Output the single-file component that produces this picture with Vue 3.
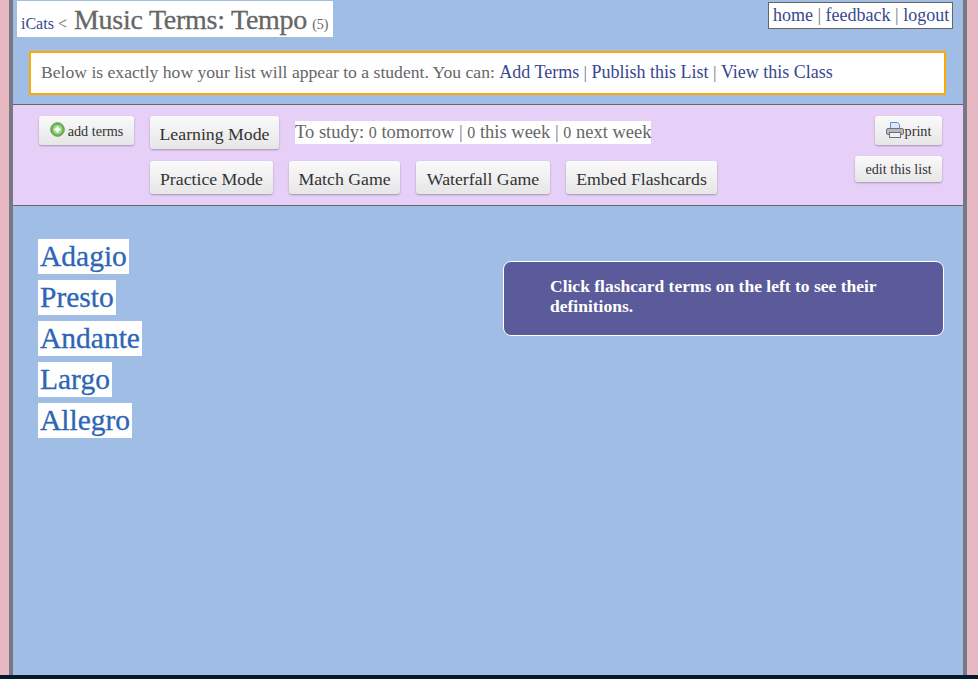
<script setup>
const terms = ['Adagio', 'Presto', 'Andante', 'Largo', 'Allegro']
const modes = [
  { label: 'Practice Mode', width: 123 },
  { label: 'Match Game', width: 111 },
  { label: 'Waterfall Game', width: 134 },
  { label: 'Embed Flashcards', width: 151 },
]
</script>

<template>
  <div class="page">
    <main class="frame">
      <header class="head">
        <div class="headrow">
          <h1 class="title"><a class="crumb">iCats</a> <span class="lt">&lt;</span> <span class="name">Music Terms: Tempo</span> <small class="count">(5)</small></h1>
          <nav class="nav"><a>home</a> <i>|</i> <a>feedback</a> <i>|</i> <a>logout</a></nav>
        </div>
        <p class="notice">Below is exactly how your list will appear to a student. You can: <a>Add Terms</a> <i>|</i> <a>Publish this List</a> <i>|</i> <a>View this Class</a></p>
      </header>
      <section class="tools">
        <div class="left"><button class="btn small add">
          <svg class="ico" width="15" height="15" viewBox="0 0 15 15"><circle cx="7.5" cy="7.5" r="6.8" fill="#6fb65a" stroke="#5a9c4a"/><circle cx="7.5" cy="7.5" r="4.6" fill="#a5d88f"/><path d="M7.5 4.5v6M4.5 7.5h6" stroke="#fff" stroke-width="2"/></svg>
          add terms</button></div>
        <div class="center">
          <div class="row first">
            <button class="btn learn">Learning Mode</button>
            <span class="study">To study: <b>0</b> tomorrow <i>|</i> <b>0</b> this week <i>|</i> <b>0</b> next week</span>
          </div>
          <div class="row">
            <button v-for="m in modes" :key="m.label" class="btn" :style="{ width: m.width + 'px' }">{{ m.label }}</button>
          </div>
        </div>
        <div class="right">
          <button class="btn small print">
            <svg class="ico" width="18" height="16" viewBox="0 0 18 16"><path d="M4.5 .5h7l2 2v7h-9z" fill="#dbe9f8" stroke="#5d8fcc"/><rect x=".5" y="6.5" width="17" height="6" rx="1.5" fill="#b4b9c0" stroke="#6d7278"/><rect x="3.5" y="10.5" width="11" height="5" fill="#eef0f2" stroke="#6d7278"/></svg>
            print</button>
          <button class="btn small edit">edit this list</button>
        </div>
      </section>
      <section class="content">
        <ul class="terms"><li v-for="t in terms" :key="t"><a>{{ t }}</a></li></ul>
        <aside class="card">Click flashcard terms on the left to see their definitions.</aside>
      </section>
    </main>
    <footer class="strip"></footer>
  </div>
</template>

<style scoped>
.page { height: 679px; overflow: hidden; background: #e7b8c1; display: flex; flex-direction: column; font-family: "Liberation Serif", serif; color: #666; }
.frame { flex: 1; margin: 0 11px 0 9px; border-left: 4px solid #777885; border-right: 4px solid #777885; background: #a0bde6; display: flex; flex-direction: column; min-height: 0; }
.strip { height: 4px; background: #031a2c; }
a { color: #37478f; }
i { font-style: normal; color: #6f7590; }
.head { height: 105px; box-sizing: border-box; padding: 1px 10px 0 4px; border-bottom: 1px solid #666; }
.headrow { display: flex; justify-content: space-between; align-items: flex-start; }
.title { margin: 0; height: 36px; width: 316px; box-sizing: border-box; background: #fff; padding-left: 4px; font-weight: normal; font-size: 16px; line-height: 37px; white-space: nowrap; }
.name { margin-left: 3px; font-size: 28px; letter-spacing: -.25px; color: #666; -webkit-text-stroke: .3px #666; }
.count { font-size: 14px; margin-left: 1px; }
.nav { margin-top: 1px; height: 27px; width: 185px; box-sizing: border-box; background: #fff; border: 1px solid #666; font-size: 18px; line-height: 25px; padding-left: 4px; white-space: nowrap; }
.notice { margin: 14px 7px 0 12px; height: 44px; box-sizing: border-box; background: #fff; border: 2px solid #ffa800; padding-left: 10px; font-size: 17.63px; line-height: 38px; white-space: nowrap; }
.notice a { font-size: 18px; }
.tools { height: 101px; box-sizing: border-box; border-bottom: 1px solid #666; background: #e6d0f8; padding: 11px 21px 0 26px; display: flex; }
.left { width: 111px; }
.center { flex: 1; display: flex; flex-direction: column; gap: 12px; }
.row { display: flex; gap: 16px; align-items: flex-start; }
.row.first { align-items: center; height: 33px; }
.right { display: flex; flex-direction: column; align-items: flex-end; gap: 11px; }
.btn { height: 33px; padding: 4px 0 0; border: 0; border-radius: 3px; background: linear-gradient(#fafafa, #e6e6e6); box-shadow: 0 1px 2px rgba(0,0,0,.3); font-family: inherit; font-size: 17.75px; color: #333; white-space: nowrap; }
.learn { width: 129px; }
.small { height: 29px; font-size: 14.2px; }
.add { width: 95px; padding: 2px 0 0; display: flex; align-items: center; justify-content: center; gap: 3px; }
.print { width: 67px; padding: 2px 0 0; display: flex; align-items: center; justify-content: center; gap: 1px; }
.ico { margin-top: -4px; }
.edit { width: 87px; height: 26px; padding: 0; }
.study { background: #fff; font-size: 18.5px; height: 23px; line-height: 23px; white-space: nowrap; }
.study b { font-weight: normal; font-size: 16px; }
.content { flex: 1; padding: 33px 19px 0 25px; display: flex; justify-content: space-between; align-items: flex-start; }
.terms { margin: 0; padding: 0; list-style: none; display: flex; flex-direction: column; align-items: flex-start; gap: 6px; }
.terms li { height: 35px; background: #fff; padding: 0 2px; font-size: 29.5px; line-height: 34px; -webkit-text-stroke: .3px #2d66b4; }
.terms a { color: #2d66b4; }
.card { margin-top: 22px; width: 441px; height: 75px; box-sizing: border-box; background: #5b5a9a; border: 1px solid #fff; border-radius: 8px; padding: 14px 40px 0 46px; font-size: 17.5px; font-weight: bold; line-height: 20px; color: #fff; }
</style>
